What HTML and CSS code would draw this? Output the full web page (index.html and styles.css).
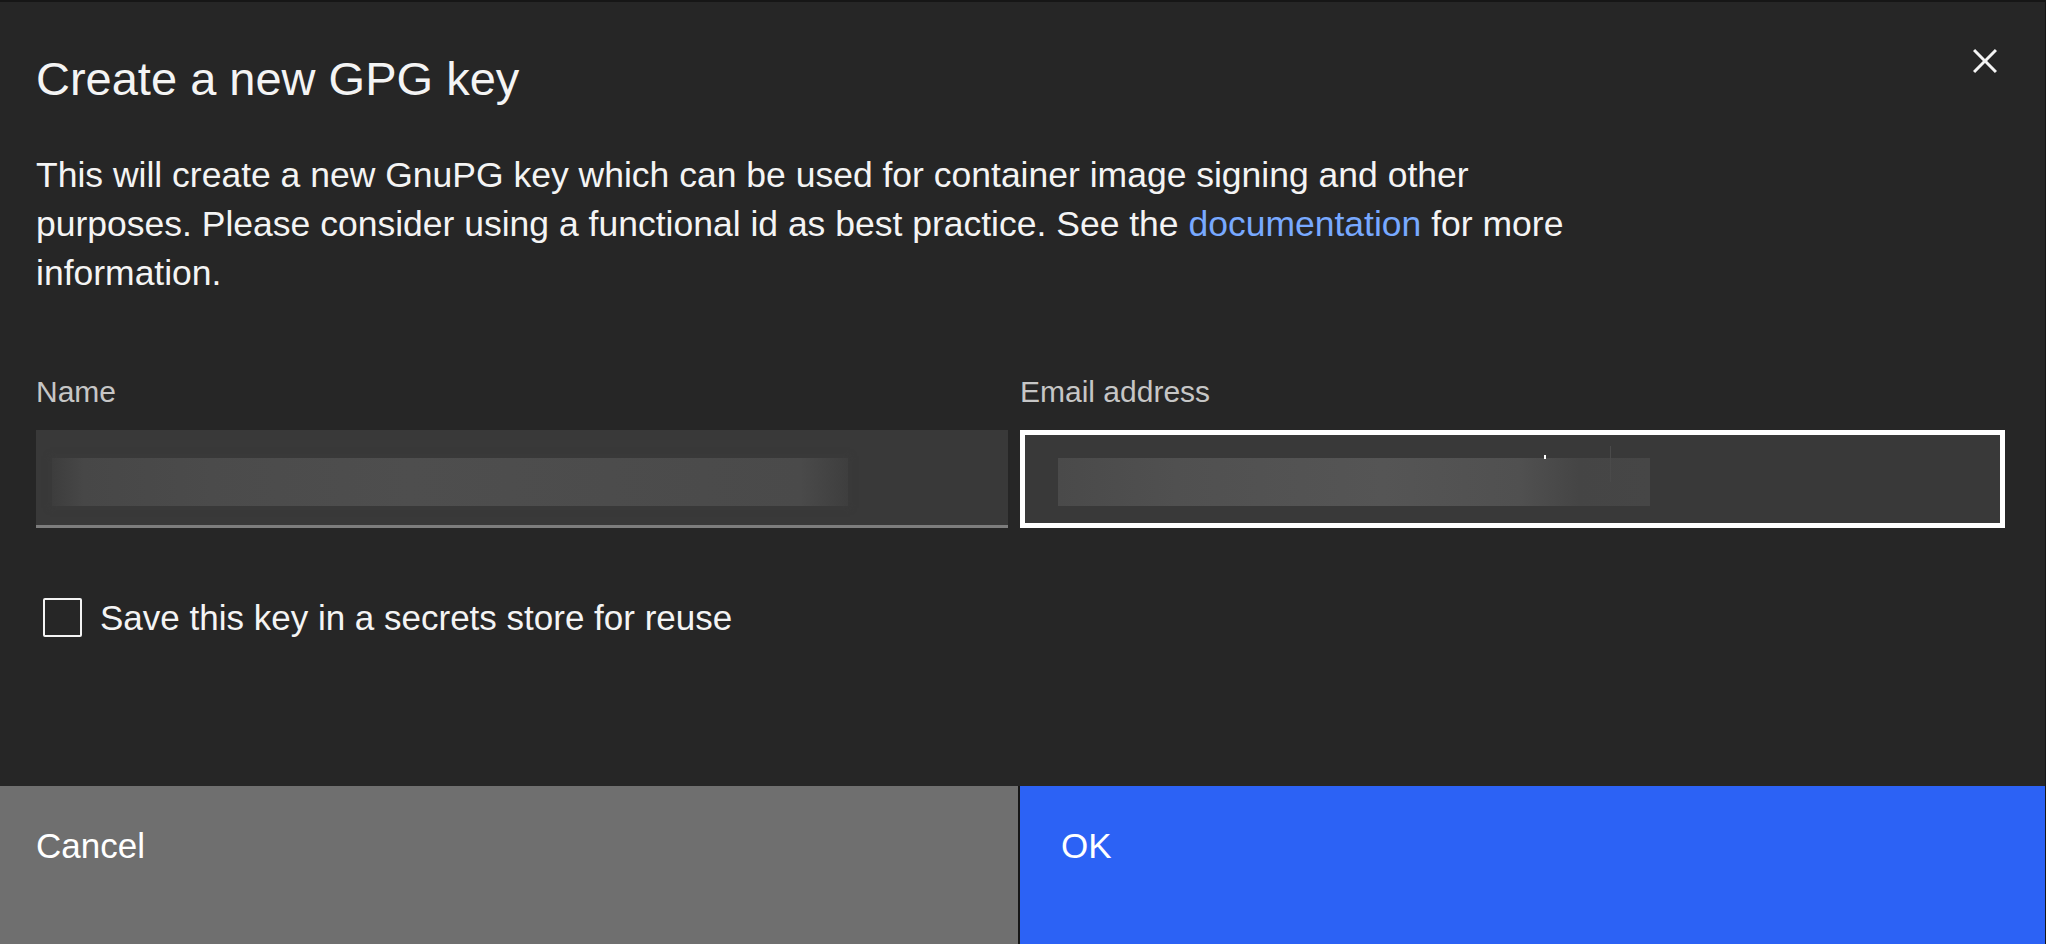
FILE: index.html
```html
<!DOCTYPE html>
<html lang="en">
<head>
<meta charset="utf-8">
<title>Create a new GPG key</title>
<link rel="stylesheet" href="styles.css">
</head>
<body>
<div class="modal">
  <header class="modal-header">
    <h2 class="modal-title">Create a new GPG key</h2>
    <button class="close-btn" aria-label="Close">
      <svg width="48" height="48" viewBox="0 0 32 32" aria-hidden="true"><path d="M24 9.4L22.6 8 16 14.6 9.4 8 8 9.4 14.6 16 8 22.6 9.4 24 16 17.4 22.6 24 24 22.6 17.4 16 24 9.4z" fill="#f4f4f4"/></svg>
    </button>
  </header>
  <div class="modal-content">
    <p class="intro">This will create a new GnuPG key which can be used for container image signing and other purposes. Please consider using a functional id as best practice. See the <a class="link" href="#">documentation</a> for more information.</p>
    <div class="fields">
      <div class="field">
        <label class="label">Name</label>
        <div class="input input-name">
          <div class="redacted redacted-name"></div>
        </div>
      </div>
      <div class="field">
        <label class="label">Email address</label>
        <div class="input input-email">
          <div class="redacted redacted-email"></div>
          <span class="tick"></span>
          <span class="vline"></span>
        </div>
      </div>
    </div>
    <div class="checkbox-row">
      <span class="checkbox"></span>
      <span class="checkbox-label">Save this key in a secrets store for reuse</span>
    </div>
  </div>
  <footer class="modal-footer">
    <button class="btn btn-secondary">Cancel</button>
    <button class="btn btn-primary">OK</button>
  </footer>
</div>
</body>
</html>
```
FILE: styles.css
```css
html, body {
  margin: 0;
  padding: 0;
}
body {
  background: #161616;
  width: 2046px;
  height: 944px;
  overflow: hidden;
  font-family: "Liberation Sans", Arial, sans-serif;
  color: #f4f4f4;
}
.modal {
  position: relative;
  margin-top: 2px;
  margin-right: 1px;
  height: 942px;
  background: #262626;
  display: flex;
  flex-direction: column;
  box-sizing: border-box;
}
.modal-header {
  padding: 49px 36px 0 36px;
}
.modal-title {
  margin: 0;
  font-size: 47px;
  line-height: 56px;
  font-weight: 400;
  color: #f4f4f4;
}
.close-btn {
  position: absolute;
  top: 35px;
  right: 36px;
  width: 48px;
  height: 48px;
  padding: 0;
  border: 0;
  background: transparent;
  display: flex;
  align-items: center;
  justify-content: center;
}
.close-btn svg {
  display: block;
}
.modal-content {
  padding: 0 0 0 36px;
}
.intro {
  margin: 44px 0 0 0;
  max-width: 1570px;
  font-size: 35.5px;
  line-height: 49px;
  color: #f4f4f4;
}
.link {
  color: #78a9ff;
  text-decoration: none;
}
.fields {
  display: grid;
  grid-template-columns: 972px 985px;
  column-gap: 12px;
  margin-top: 76px;
}
.field {
  display: flex;
  flex-direction: column;
}
.label {
  font-size: 30px;
  line-height: 36px;
  color: #c6c6c6;
  margin-bottom: 20px;
}
.input {
  position: relative;
  height: 98px;
  box-sizing: border-box;
  background: #393939;
}
.input-name {
  border-bottom: 3px solid #7d7d7d;
}
.input-email {
  border: 5px solid #ffffff;
}
.redacted {
  position: absolute;
  top: 28px;
  height: 48px;
}
.redacted-name {
  left: 16px;
  width: 796px;
  background: linear-gradient(to right, #3d3d3d 0%, #474747 4%, #4b4b4b 20%, #4e4e4e 45%, #4c4c4c 70%, #4a4a4a 94%, #3e3e3e 100%);
  box-shadow: 0 0 6px 2px rgba(60, 60, 60, 0.6);
}
.redacted-email {
  left: 33px;
  top: 23px;
  width: 592px;
  background: linear-gradient(to right, #4a4a4a 0%, #505050 20%, #555555 55%, #505050 78%, #454545 88%, #464646 100%);
}
.tick {
  position: absolute;
  left: 519px;
  top: 20px;
  width: 2px;
  height: 4px;
  background: #ffffff;
}
.vline {
  position: absolute;
  left: 585px;
  top: 11px;
  width: 1px;
  height: 36px;
  background: #4a4a4a;
}
.checkbox-row {
  display: flex;
  align-items: center;
  margin-top: 70px;
  margin-left: 7px;
  height: 39px;
}
.checkbox {
  width: 39px;
  height: 39px;
  box-sizing: border-box;
  border: 2px solid #f4f4f4;
  border-radius: 2px;
  flex: none;
}
.checkbox-label {
  margin-left: 18px;
  font-size: 35px;
  line-height: 39px;
  color: #f4f4f4;
}
.modal-footer {
  margin-top: auto;
  height: 158px;
  display: flex;
  gap: 2px;
  background: #161616;
}
.btn {
  border: 0;
  margin: 0;
  font-family: "Liberation Sans", Arial, sans-serif;
  font-size: 35px;
  line-height: 40px;
  color: #ffffff;
  text-align: left;
  display: flex;
  align-items: flex-start;
  padding-top: 40px;
  box-sizing: border-box;
}
.btn-secondary {
  width: 1018px;
  flex: none;
  background: #6f6f6f;
  padding-left: 36px;
}
.btn-primary {
  flex: 1;
  background: #2c62f5;
  padding-left: 41px;
}
```
